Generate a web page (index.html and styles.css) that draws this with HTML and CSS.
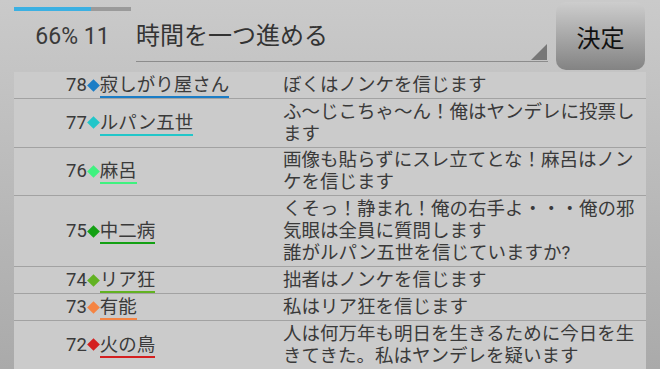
FILE: index.html
```html
<!DOCTYPE html>
<html lang="ja">
<head>
  <meta charset="UTF-8" />
  <meta name="viewport" content="width=device-width, initial-scale=1.0" />
  <title>投票</title>
  <link rel="stylesheet" href="styles.css">
</head>
<body>
  <header class="top">
    <div class="status">
      <div class="progress"><div class="progress-fill" style="width: 66%;"></div></div>
      <div class="count">66% 11</div>
    </div>
    <div class="select">
      <span class="select-text">時間を一つ進める</span>
      <span class="select-arrow"></span>
    </div>
    <button class="decide">決定</button>
  </header>

  <div class="log">
    <div class="row">
      <div class="who"><span class="num">78</span><span class="mark c-blue"></span><span class="name u-blue">寂しがり屋さん</span></div>
      <div class="msg">ぼくはノンケを信じます</div>
    </div>
    <div class="row">
      <div class="who"><span class="num">77</span><span class="mark c-cyan"></span><span class="name u-cyan">ルパン五世</span></div>
      <div class="msg">ふ～じこちゃ～ん！俺はヤンデレに投票します</div>
    </div>
    <div class="row">
      <div class="who"><span class="num">76</span><span class="mark c-mint"></span><span class="name u-mint">麻呂</span></div>
      <div class="msg">画像も貼らずにスレ立てとな！麻呂はノンケを信じます</div>
    </div>
    <div class="row">
      <div class="who"><span class="num">75</span><span class="mark c-green"></span><span class="name u-green">中二病</span></div>
      <div class="msg">くそっ！静まれ！俺の右手よ・・・俺の邪気眼は全員に質問します<br>誰がルパン五世を信じていますか?</div>
    </div>
    <div class="row">
      <div class="who"><span class="num">74</span><span class="mark c-lime"></span><span class="name u-lime">リア狂</span></div>
      <div class="msg">拙者はノンケを信じます</div>
    </div>
    <div class="row">
      <div class="who"><span class="num">73</span><span class="mark c-orange"></span><span class="name u-orange">有能</span></div>
      <div class="msg">私はリア狂を信じます</div>
    </div>
    <div class="row">
      <div class="who"><span class="num">72</span><span class="mark c-red"></span><span class="name u-red">火の鳥</span></div>
      <div class="msg">人は何万年も明日を生きるために今日を生きてきた。私はヤンデレを疑います</div>
    </div>
  </div>
</body>
</html>
```

FILE: styles.css
```css
html, body {
  height: 100%;
}
body {
  margin: 0;
  overflow: hidden;
  font-family: 'Roboto', 'Noto Sans CJK JP', sans-serif;
  background: linear-gradient(#cacaca, #aaaaaa);
  color: #333;
}
.top {
  display: flex;
  align-items: flex-start;
  height: 72px;
  box-sizing: border-box;
  padding: 2px 15px 2px 14px;
}
.status {
  width: 117px;
  display: flex;
  flex-direction: column;
  align-items: center;
  padding-top: 5px;
}
.progress {
  width: 100%;
  height: 4px;
  background: #9a9a9a;
}
.progress-fill {
  height: 100%;
  background: #3bb0e2;
}
.count {
  margin-top: 12px;
  font-size: 23px;
  line-height: 27px;
  color: #3a3a3a;
}
.select {
  display: flex;
  width: 412px;
  height: 59px;
  margin-left: 5px;
  border-bottom: 1px solid #8c8c8c;
}
.select-text {
  flex: 1;
  align-self: center;
  padding-top: 4px;
  font-size: 24px;
  color: #333;
}
.select-arrow {
  align-self: flex-end;
  width: 16px;
  height: 16px;
  margin-right: 1px;
  margin-bottom: 1px;
  background: #777;
  clip-path: polygon(100% 0, 100% 100%, 0 100%);
}
.decide {
  width: 89px;
  height: 68px;
  margin-left: 8px;
  border: none;
  border-radius: 10px;
  background: linear-gradient(#cdcdcd, #838383);
  font-family: 'Roboto', 'Noto Sans CJK JP', sans-serif;
  font-size: 24px;
  color: #111;
  padding: 0;
}
.log {
  margin: 0 14px;
  background: #cbcbcb;
}
.row {
  display: grid;
  grid-template-columns: 268px 1fr;
  border-bottom: 1px solid #a2a2a2;
  font-size: 18.5px;
  line-height: 22.3px;
}
.who {
  display: flex;
  align-items: center;
  padding-left: 52px;
  color: #3a3a3a;
}
.mark {
  display: inline-block;
  width: 9px;
  height: 9px;
  margin: 0 2px 0 2px;
  transform: rotate(45deg);
}
.name {
  line-height: 21px;
  border-bottom: 2px solid;
  margin-top: 3px;
}
.msg {
  padding: 1.5px 4px 1.5px 1px;
  color: #3a3a3a;
}
.c-blue { background: #1b7dc6; }
.c-cyan { background: #22c6c9; }
.c-mint { background: #3ff27f; }
.c-green { background: #13a013; }
.c-lime { background: #62b222; }
.c-orange { background: #f58443; }
.c-red { background: #d42020; }
.u-blue { border-bottom-color: #1b7dc6; }
.u-cyan { border-bottom-color: #22c6c9; }
.u-mint { border-bottom-color: #3ff27f; }
.u-green { border-bottom-color: #13a013; }
.u-lime { border-bottom-color: #62b222; }
.u-orange { border-bottom-color: #f58443; }
.u-red { border-bottom-color: #d42020; }
```
